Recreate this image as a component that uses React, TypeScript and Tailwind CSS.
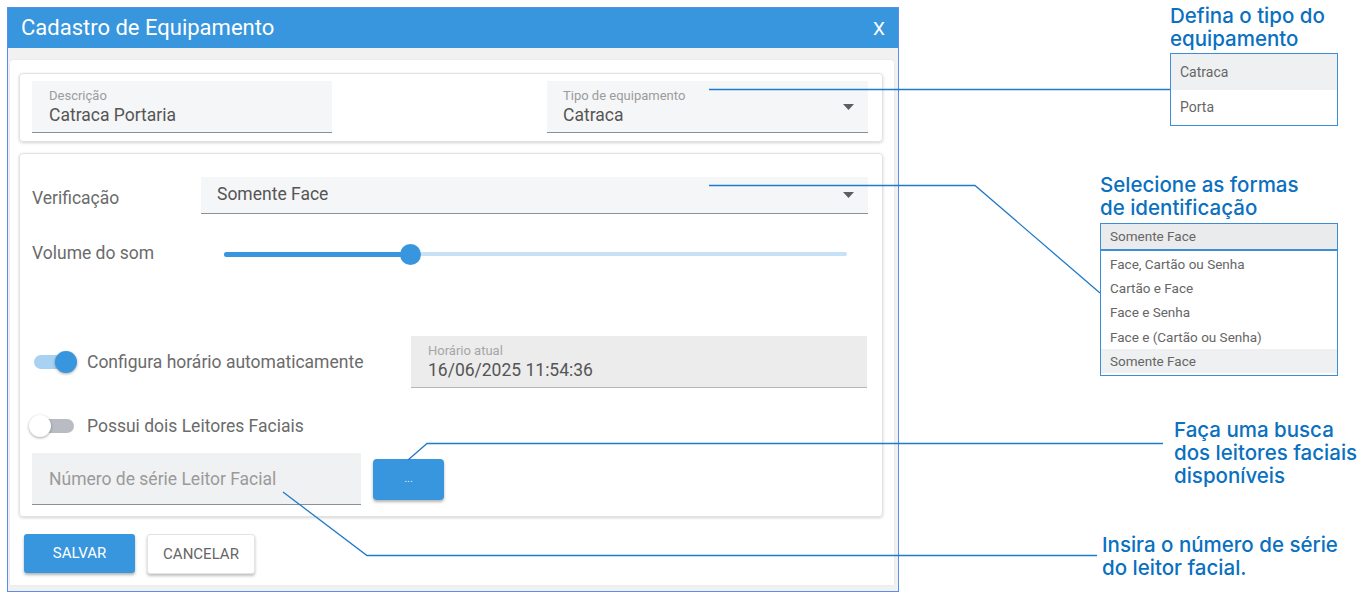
import React, { useState } from 'react'

const Caret = () => (
  <svg width="11" height="6" viewBox="0 0 11 6">
    <path d="M0 0h11L5.5 6z" fill="#5a5f66" />
  </svg>
)

const Toggle: React.FC<{ on: boolean }> = ({ on }) => (
  <div className={`relative w-[40px] h-[14px] rounded-full ${on ? 'bg-[#a9d2f2]' : 'bg-[#b9bdc3]'}`}>
    <div
      className={`absolute top-[-4px] w-[22px] h-[22px] rounded-full shadow-[0_1px_3px_rgba(0,0,0,0.35)] ${
        on ? 'left-[21px] bg-[#3796dd]' : 'left-[-5px] bg-white'
      }`}
    />
  </div>
)

const App: React.FC = () => {
  const [autoTime] = useState(true)
  const [twoReaders] = useState(false)
  const volume = 30

  return (
    <div className="relative w-[1362px] h-[594px] bg-white overflow-hidden font-[Roboto,sans-serif] flex">
      {/* dialog */}
      <div className="ml-[7px] mt-[7px] w-[892px] h-[585px] border border-[#5b8def] flex flex-col">
        <div className="h-[40px] bg-[#3796dd] flex items-center justify-between pl-[13px] pr-[13px] text-white">
          <span className="text-[22px] leading-none">Cadastro de Equipamento</span>
          <span className="text-[19px] leading-none">X</span>
        </div>

        <div className="flex-1 bg-[#f1f1f1] pt-[12px] pl-[2px] pr-[4px] pb-[6px] flex">
          <div className="flex-1 bg-white rounded-t-[4px] shadow-[0_0_2px_rgba(0,0,0,0.08)] pt-[13px] pl-[9px] pr-[11px]">
            {/* card 1 */}
            <div className="h-[69px] border border-[#e2e2e2] rounded-[4px] shadow-[0_1px_3px_rgba(0,0,0,0.18)] flex justify-between pt-[7px] pl-[12px] pr-[14px]">
              <div className="w-[300px] h-[52px] bg-[#f5f6f7] border-b border-[#8a9099] pl-[17px] pt-[7px]">
                <div className="text-[13px] leading-[16px] text-[#9c9c9c]">Descrição</div>
                <div className="text-[17.5px] leading-[22px] text-[#555]">Catraca Portaria</div>
              </div>
              <div className="w-[321px] h-[52px] bg-[#f5f6f7] border-b border-[#8a9099] pl-[16px] pr-[14px] pt-[7px] flex justify-between">
                <div>
                  <div className="text-[13px] leading-[16px] text-[#9c9c9c]">Tipo de equipamento</div>
                  <div className="text-[17.5px] leading-[22px] text-[#555]">Catraca</div>
                </div>
                <div className="pt-[16px]">
                  <Caret />
                </div>
              </div>
            </div>

            {/* card 2 */}
            <div className="mt-[11px] h-[364px] border border-[#e2e2e2] rounded-[4px] shadow-[0_1px_3px_rgba(0,0,0,0.18)] pt-[23px] pl-[12px] pr-[14px]">
              <div className="flex h-[37px]">
                <div className="w-[169px] pt-[10px] text-[17.5px] leading-[22px] text-[#6b6b6b]">Verificação</div>
                <div className="flex-1 bg-[#f5f6f7] border-b border-[#8a9099] pl-[16px] pr-[14px] flex items-center justify-between">
                  <span className="text-[17.5px] leading-[22px] text-[#555] -mt-[3px]">Somente Face</span>
                  <Caret />
                </div>
              </div>

              <div className="flex items-center h-[24px] mt-[28px]">
                <div className="w-[192px] text-[17.5px] leading-[22px] text-[#6b6b6b] -mt-[3px]">Volume do som</div>
                <div className="relative flex-1 mr-[21px] h-[4px] rounded-full bg-[#c7e1f6]">
                  <div className="absolute left-0 top-[-0.5px] h-[5px] rounded-full bg-[#3796dd]" style={{ width: `${volume}%` }} />
                  <div
                    className="absolute top-[-8.5px] w-[21px] h-[21px] -ml-[10.5px] rounded-full bg-[#3796dd]"
                    style={{ left: `${volume}%` }}
                  />
                </div>
              </div>

              <div className="flex items-center mt-[70px]">
                <div className="w-[379px] flex items-center">
                  <div className="ml-[2px] w-[53px]">
                    <Toggle on={autoTime} />
                  </div>
                  <span className="text-[17.5px] leading-[22px] text-[#6b6b6b]">Configura horário automaticamente</span>
                </div>
                <div className="w-[456px] h-[52px] bg-[#ececed] border-b border-[#b3b7bd] pl-[17px] pt-[7px]">
                  <div className="text-[13px] leading-[16px] text-[#a6a6a6]">Horário atual</div>
                  <div className="text-[17.5px] leading-[22px] text-[#555]">16/06/2025 11:54:36</div>
                </div>
              </div>

              <div className="flex items-center h-[24px] mt-[26px]">
                <div className="ml-[2px] w-[53px]">
                  <Toggle on={twoReaders} />
                </div>
                <span className="text-[17.5px] leading-[22px] text-[#6b6b6b]">Possui dois Leitores Faciais</span>
              </div>

              <div className="flex mt-[15px]">
                <div className="w-[329px] h-[52px] bg-[#f0f1f2] border-b border-[#8a9099] pl-[17px] flex items-center">
                  <span className="text-[17.5px] leading-[22px] text-[#9a9a9a]">Número de série Leitor Facial</span>
                </div>
                <button className="ml-[12px] mt-[6px] w-[71px] h-[41px] rounded-[4px] bg-[#3796dd] text-[#dcecf9] text-[11px] shadow-[0_2px_3px_rgba(0,0,0,0.3)]">
                  ...
                </button>
              </div>
            </div>

            {/* actions */}
            <div className="flex gap-[12px] mt-[17px] pl-[5px]">
              <button className="w-[111px] h-[39px] rounded-[3px] bg-[#3796dd] text-white text-[15px] shadow-[0_2px_3px_rgba(0,0,0,0.3)]">
                SALVAR
              </button>
              <button className="w-[108px] h-[40px] rounded-[3px] bg-white border border-[#e4e4e4] text-[#666] text-[15px] shadow-[0_2px_3px_rgba(0,0,0,0.25)]">
                CANCELAR
              </button>
            </div>
          </div>
        </div>
      </div>

      {/* callouts */}
      <div className="ml-[198px] flex flex-col font-[Inter,sans-serif] text-[#0a70c0]">
        <div className="ml-[73px] mt-[4px] w-[168px]">
          <div className="text-[20.5px] leading-[23px] font-medium whitespace-nowrap">
            Defina o tipo do
            <br />
            equipamento
          </div>
          <div className="mt-[3px] h-[73px] border border-[#3d8ed6] font-[Roboto,sans-serif] text-[14px] text-[#666]">
            <div className="h-[36px] bg-[#eff0f1] pl-[9px] flex items-center">Catraca</div>
            <div className="h-[35px] pl-[9px] flex items-center">Porta</div>
          </div>
        </div>

        <div className="ml-[3px] mt-[47px] w-[238px]">
          <div className="text-[20.5px] leading-[23px] font-medium whitespace-nowrap">
            Selecione as formas
            <br />
            de identificação
          </div>
          <div className="mt-[4px] h-[153px] border border-[#3d8ed6] font-[Roboto,sans-serif] text-[13.5px] text-[#666]">
            <div className="h-[27px] bg-[#eaebec] border-b-2 border-[#3d8ed6] pl-[9px] flex items-center">Somente Face</div>
            <div className="h-[25px] pl-[9px] pt-[2px] flex items-center">Face, Cartão ou Senha</div>
            <div className="h-[24px] pl-[9px] flex items-center">Cartão e Face</div>
            <div className="h-[25px] pl-[9px] flex items-center">Face e Senha</div>
            <div className="h-[24px] pl-[9px] flex items-center">Face e (Cartão ou Senha)</div>
            <div className="h-[24px] bg-[#eef0f1] pl-[9px] flex items-center">Somente Face</div>
          </div>
        </div>

        <div className="ml-[77px] mt-[42px] text-[20.5px] leading-[23px] font-medium whitespace-nowrap">
          Faça uma busca
          <br />
          dos leitores faciais
          <br />
          disponíveis
        </div>

        <div className="ml-[5px] mt-[46px] text-[20.5px] leading-[23px] font-medium whitespace-nowrap">
          Insira o número de série
          <br />
          do leitor facial.
        </div>
      </div>

      {/* connector lines */}
      <svg className="absolute inset-0 pointer-events-none" width="1362" height="594">
        <g fill="none" stroke="#1f7bc9" strokeWidth="1.3">
          <path d="M709 89.5H1170" />
          <path d="M709 185.5H975L1100 293" />
          <path d="M408 460L427 443.5H1163" />
          <path d="M283 492L367 555.5H1097" />
        </g>
      </svg>
    </div>
  )
}

export default App
